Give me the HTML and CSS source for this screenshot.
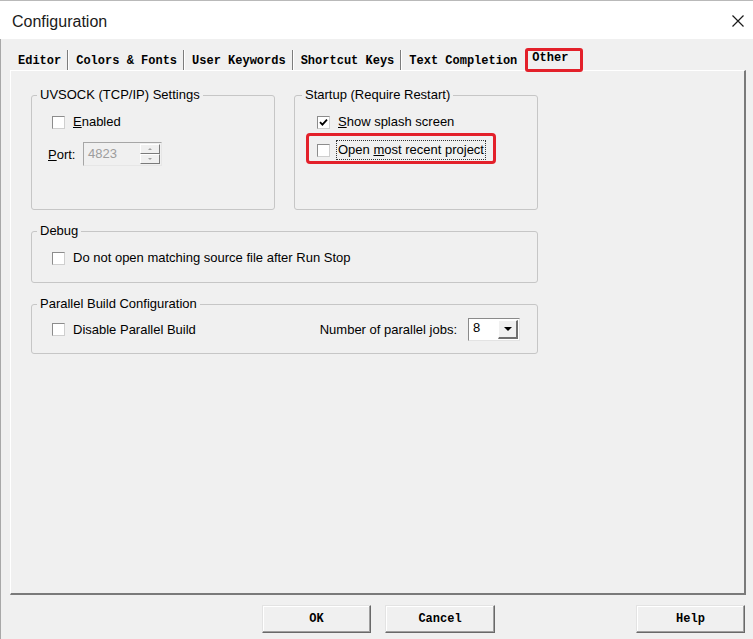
FILE: index.html
```html
<!DOCTYPE html>
<html lang="en">
<head>
  <meta charset="UTF-8" />
  <title>Configuration</title>
  <link rel="stylesheet" href="styles.css">
</head>
<body>
  <div class="dialog">
    <div class="titlebar">
      <span class="title">Configuration</span>
      <svg class="close" width="12" height="12" viewBox="0 0 12 12">
        <path d="M0.5 0.5L11.5 11.5M11.5 0.5L0.5 11.5" stroke="#1a1a1a" stroke-width="1.2" fill="none"/>
      </svg>
    </div>

    <div class="client">
      <!-- tab strip -->
      <div class="tabs">
        <span class="tab">Editor</span>
        <span class="tab">Colors &amp; Fonts</span>
        <span class="tab">User Keywords</span>
        <span class="tab">Shortcut Keys</span>
        <span class="tab plain">Text Completion</span>
        <span class="tab active">Other</span>
      </div>

      <!-- "Other" page -->
      <div class="page">
        <div class="group-row">
          <fieldset class="group uvsock">
            <legend>UVSOCK (TCP/IP) Settings</legend>
            <div class="check first">
              <span class="box"></span>
              <span><u>E</u>nabled</span>
            </div>
            <div class="port-row">
              <span class="port-label"><u>P</u>ort:</span>
              <div class="spin-edit">
                <span class="spin-text">4823</span>
                <div class="spin">
                  <span class="spin-btn"><i class="arrow up"></i></span>
                  <span class="spin-btn"><i class="arrow down"></i></span>
                </div>
              </div>
            </div>
          </fieldset>

          <fieldset class="group startup">
            <legend>Startup (Require Restart)</legend>
            <div class="check first">
              <span class="box checked">
                <svg width="9" height="9" viewBox="0 0 9 9"><path d="M1 4.2L3.4 6.6L8 1.6" stroke="#000" stroke-width="1.8" fill="none"/></svg>
              </span>
              <span><u>S</u>how splash screen</span>
            </div>
            <div class="check highlight">
              <span class="box"></span>
              <span class="focus">Open <u>m</u>ost recent project</span>
            </div>
          </fieldset>
        </div>

        <fieldset class="group debug">
          <legend>Debug</legend>
          <div class="check first">
            <span class="box"></span>
            <span>Do not open matching source file after Run Stop</span>
          </div>
        </fieldset>

        <fieldset class="group parallel">
          <legend>Parallel Build Configuration</legend>
          <div class="jobs-row">
            <div class="check">
              <span class="box"></span>
              <span>Disable Parallel Build</span>
            </div>
            <div class="jobs">
              <span>Number of parallel jobs:</span>
              <div class="select">
                <span class="select-text">8</span>
                <span class="drop-btn"><i class="arrow drop"></i></span>
              </div>
            </div>
          </div>
        </fieldset>
      </div>

      <div class="buttons">
        <button class="btn ok">OK</button>
        <button class="btn cancel">Cancel</button>
        <button class="btn help">Help</button>
      </div>
    </div>
  </div>
</body>
</html>
```

FILE: styles.css
```css
body {
  margin: 0;
  background: #f0f0f0;
  font-family: "Liberation Sans", Arial, sans-serif;
  font-size: 13px;
  color: #000;
}
.dialog {
  width: 753px;
  height: 639px;
  overflow: hidden;
}
.titlebar {
  box-sizing: border-box;
  height: 39px;
  background: #fff;
  border-top: 1px solid #b9b9b9;
  display: flex;
  align-items: center;
  justify-content: space-between;
  padding: 3px 9px 0 12px;
}
.title {
  font-size: 16px;
  color: #1a1a1a;
}
.close { display: block; margin-top: -2px; }

.client {
  height: 600px;
  border-left: 1px solid #a8a8a8;
}

/* tabs */
.tabs {
  display: flex;
  align-items: flex-start;
  padding: 11px 0 0 10px;
  height: 20px;
  font-family: "Liberation Mono", "Courier New", monospace;
  font-size: 12px;
  font-weight: bold;
}
.tab {
  line-height: 18px;
  padding: 2px 6px 0 7px;
  border-right: 1px solid #7c7c7c;
  box-shadow: 1px 0 0 #fff;
  margin-right: 1px;
  white-space: pre;
}
.tab.plain {
  border-right: none;
  box-shadow: none;
  padding-right: 8px;
  margin-right: 0;
}
.tab.active {
  border: 3px solid #e3202a;
  border-radius: 3px;
  line-height: 14px;
  padding: 0 12px 4px 4px;
  margin: -2px 0 -2px 0;
  box-shadow: none;
}

/* tab page */
.page {
  box-sizing: border-box;
  height: 525px;
  margin: 0 7px 0 9px;
  border-top: 1px solid #fff;
  border-left: 1px solid #fff;
  border-right: 2px solid #7a7a7a;
  border-bottom: 2px solid #7a7a7a;
  padding: 16px 0 0 20px;
}
.group-row {
  display: flex;
  gap: 19px;
  width: 507px;
}
.group {
  box-sizing: border-box;
  margin: 0;
  min-width: 0;
  border: 1px solid #c6c6c6;
  border-radius: 3px;
  padding: 0 0 0 20px;
}
.group legend {
  margin-left: -15px;
  padding: 0 3px;
  line-height: 16px;
}
.uvsock { width: 244px; padding-bottom: 43px; }
.startup { width: 244px; padding-left: 22px; }
.startup legend { margin-left: -15px; }
.debug { width: 507px; margin-top: 13px; padding-bottom: 16px; }
.parallel { width: 507px; margin-top: 13px; padding-bottom: 12px; padding-right: 17px; }

/* checkboxes */
.check {
  display: flex;
  align-items: center;
  gap: 8px;
  line-height: 16px;
}
.check.first { margin-top: 11px; }
.box {
  box-sizing: border-box;
  width: 13px;
  height: 13px;
  flex: none;
  background: #fff;
  border: 1px solid #8c8c8c;
  border-right-color: #cfcfcf;
  border-bottom-color: #cfcfcf;
  display: flex;
  align-items: center;
  justify-content: center;
}
.box svg { display: block; }
.highlight {
  width: fit-content;
  gap: 6px;
  margin: 3px 0 0 -11px;
  padding: 4px 7px 1px 8px;
  border: 3px solid #e3202a;
  border-radius: 4px;
}
.focus {
  border: 1px dotted #333;
  padding: 1px;
}

/* port spin edit */
.port-row {
  display: flex;
  align-items: center;
  margin: 12px 0 0 -4px;
}
.port-label { width: 35px; }
.spin-edit {
  box-sizing: border-box;
  width: 79px;
  height: 24px;
  display: flex;
  background: #f0f0f0;
  border: 1px solid #a6a6a6;
  border-right-color: #e6e6e6;
  border-bottom-color: #e6e6e6;
}
.spin-text {
  flex: 1;
  color: #9d9d9d;
  padding-left: 4px;
  line-height: 21px;
}
.spin {
  width: 20px;
  display: flex;
  flex-direction: column;
  padding: 1px 1px 1px 0;
}
.spin-btn {
  flex: 1;
  display: flex;
  align-items: center;
  justify-content: center;
  border: 1px solid #fff;
  border-right-color: #7a7a7a;
  border-bottom-color: #7a7a7a;
}
.arrow {
  width: 0;
  height: 0;
  border-left: 2px solid transparent;
  border-right: 2px solid transparent;
}
.arrow.up { border-bottom: 2px solid #a0a0a0; }
.arrow.down { border-top: 2px solid #a0a0a0; }

/* jobs select */
.jobs-row {
  display: flex;
  align-items: center;
  justify-content: space-between;
  margin-top: 6px;
}
.jobs {
  display: flex;
  align-items: center;
  gap: 11px;
}
.select {
  box-sizing: border-box;
  width: 52px;
  height: 23px;
  display: flex;
  background: #fff;
  border: 1px solid #8a8a8a;
  border-right-color: #e3e3e3;
  border-bottom-color: #e3e3e3;
  padding: 1px;
}
.select-text {
  flex: 1;
  padding-left: 3px;
  line-height: 15px;
}
.drop-btn {
  box-sizing: border-box;
  width: 20px;
  background: #f0f0f0;
  display: flex;
  align-items: center;
  justify-content: center;
  border: 1px solid #fff;
  border-right: 2px solid #6f6f6f;
  border-bottom: 2px solid #6f6f6f;
}
.arrow.drop {
  border-left-width: 4px;
  border-right-width: 4px;
  border-top: 4px solid #000;
}

/* bottom buttons */
.buttons {
  display: flex;
  padding: 10px 8px 0 261px;
}
.btn {
  box-sizing: border-box;
  width: 109px;
  height: 28px;
  padding: 0;
  background: #f0f0f0;
  font-family: "Liberation Mono", "Courier New", monospace;
  font-size: 12px;
  font-weight: bold;
  color: #000;
  border: 1px solid;
  border-color: #e3e3e3 #696969 #696969 #e3e3e3;
  box-shadow: inset -1px -1px 0 #a0a0a0, inset 1px 1px 0 #fff;
}
.btn.cancel { width: 110px; margin-left: 14px; }
.btn.help { margin-left: auto; }
```
